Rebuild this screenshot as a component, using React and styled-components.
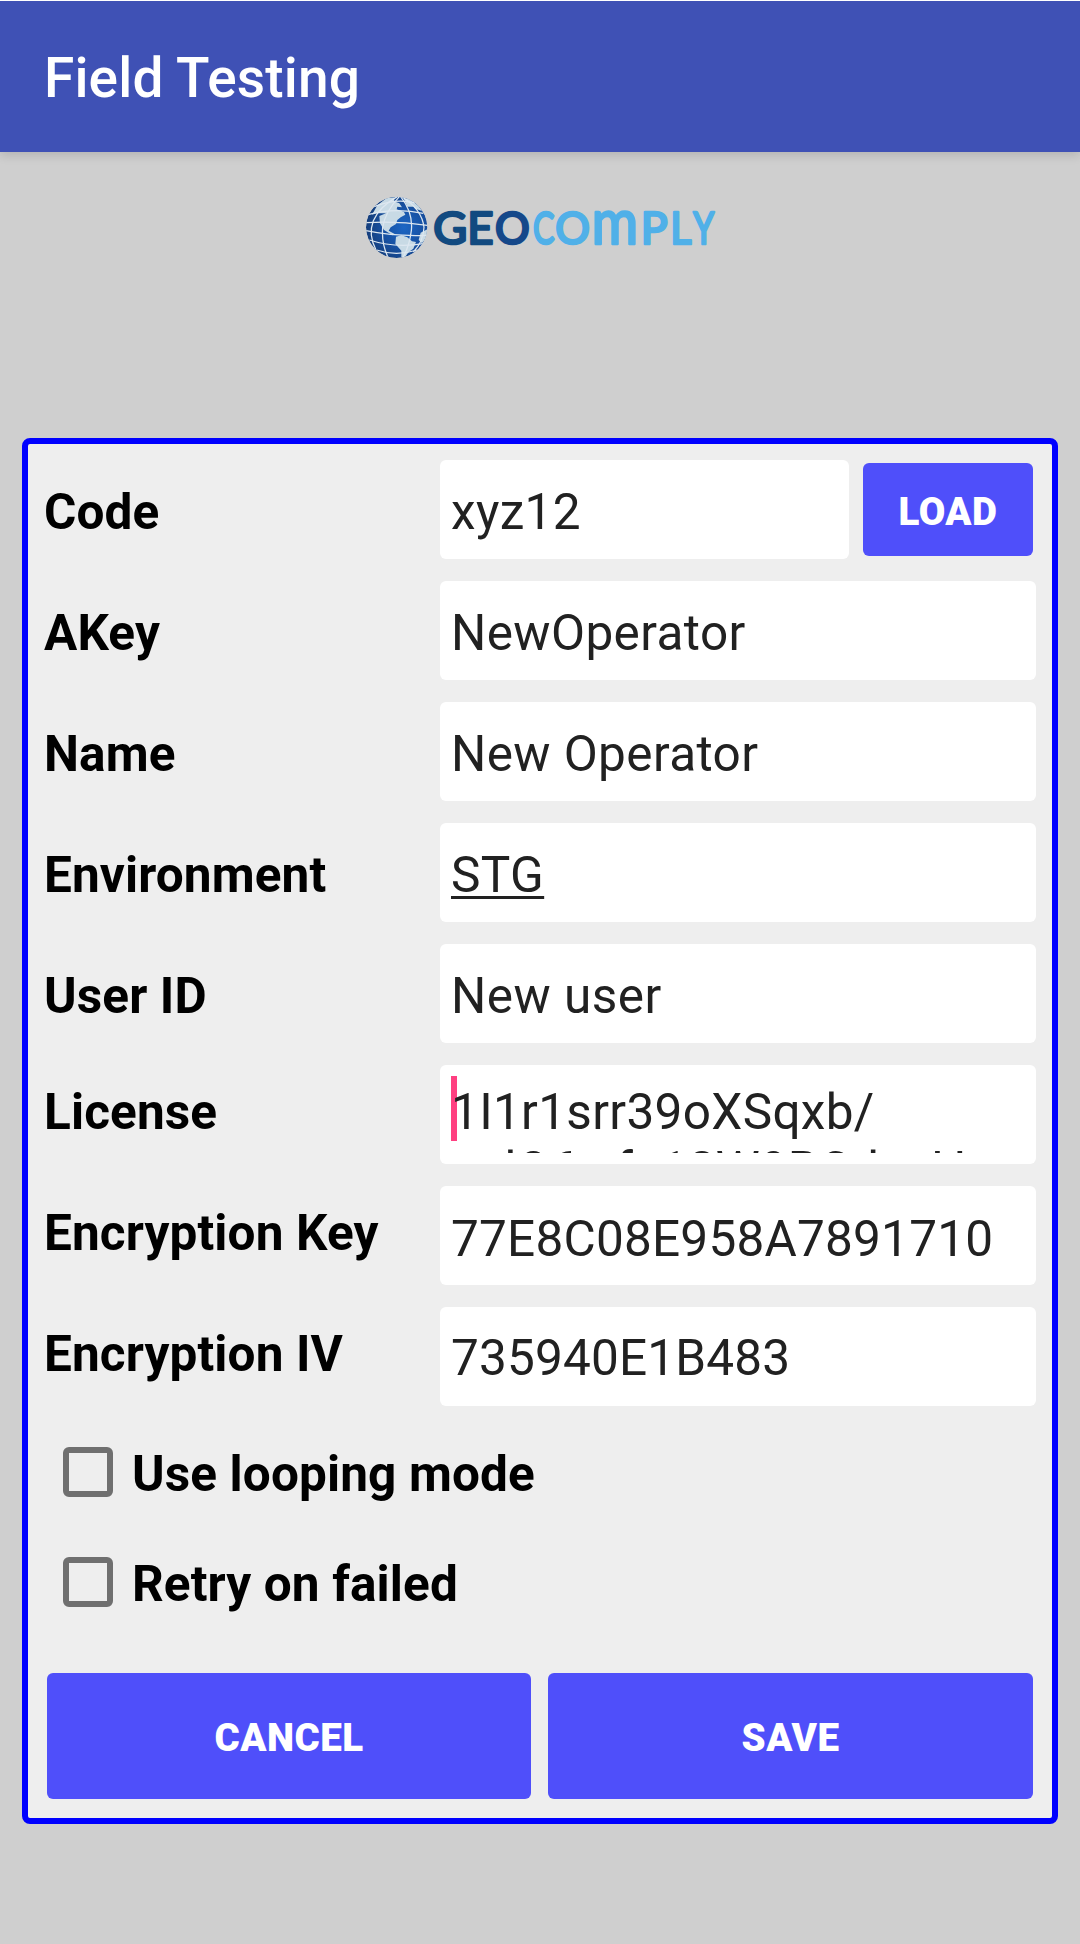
import React from "react";
import styled, { createGlobalStyle } from "styled-components";

const GlobalStyle = createGlobalStyle`
  *, *::before, *::after { box-sizing: border-box; }
  body { margin: 0; background: #cfcfcf; font-family: Roboto, "Noto Sans", sans-serif; }
`;

const Screen = styled.div`
  display: flex;
  flex-direction: column;
  width: 1080px;
  height: 1944px;
  overflow: hidden;
  background: #cfcfcf;
`;

const AppBar = styled.header`
  height: 152px;
  flex: none;
  border-top: 1px solid #fff;
  background: #3f51b5;
  box-shadow: 0 3px 10px rgba(0, 0, 0, 0.14);
`;

const Title = styled.h1`
  margin: 0;
  padding: 45px 44px 0;
  color: #fff;
  font-size: 55px;
  line-height: 64px;
  font-weight: 500;
  letter-spacing: 0.15px;
`;

const LogoArea = styled.div`
  display: flex;
  justify-content: center;
  height: 286px;
  flex: none;
  padding-top: 28px;
`;

const LogoSvg = styled.svg`
  display: block;
  width: 380px;
  height: 95px;
`;

const Card = styled.main`
  display: flex;
  flex-direction: column;
  height: 1386px;
  flex: none;
  margin: 0 22px;
  padding: 16px;
  border: 6px solid #0000ff;
  border-radius: 8px;
  background: #eeeeee;
`;

const Fields = styled.div`
  display: grid;
  gap: 22px;
`;

const Row = styled.div`
  display: grid;
  grid-template-columns: 396px 1fr;
  height: 99px;
`;

const Label = styled.label`
  padding-top: ${(p) => p.$top}px;
  color: #000;
  font-size: 49.5px;
  line-height: 58px;
  font-weight: 700;
  letter-spacing: 0.13px;
  white-space: nowrap;
`;

const Control = styled.div`
  display: flex;
  align-items: flex-start;
  width: 596px;
`;

const Input = styled.div`
  position: relative;
  flex: 1;
  min-width: 0;
  height: 99px;
  padding: ${(p) => p.$top}px 11px 0;
  border-radius: 6px;
  background: #fff;
  color: #212121;
  font-size: 49.5px;
  line-height: 58px;
  letter-spacing: ${(p) => p.$spacing}px;
  white-space: nowrap;
`;

const Underlined = styled.span`
  text-decoration: underline;
  text-decoration-thickness: 2.5px;
  text-underline-offset: 4px;
  text-decoration-skip-ink: none;
`;

const Clip = styled.div`
  position: relative;
  height: 70px;
  overflow: hidden;
`;

const NextLine = styled.span`
  letter-spacing: 0.1px;
`;

const Caret = styled.i`
  position: absolute;
  left: 11px;
  top: 11px;
  width: 6px;
  height: 65px;
  background: #ff4081;
`;

const Button = styled.button`
  flex: none;
  width: ${(p) => p.$width}px;
  height: ${(p) => p.$height}px;
  margin: ${(p) => p.$margin || "0"};
  padding: 4px 0 0;
  border: 0;
  border-radius: 6px;
  background: #4f4ffa;
  color: #fff;
  font-family: inherit;
  font-size: 38.5px;
  line-height: 46px;
  font-weight: 900;
  letter-spacing: 0.5px;
`;

const Options = styled.div`
  display: flex;
  flex-direction: column;
  gap: 52px;
  padding: 39px 0 0 19px;
`;

const Option = styled.label`
  display: flex;
  height: 58px;
  gap: 19px;
  color: #000;
  font-size: 49.5px;
  line-height: 58px;
  font-weight: 700;
  letter-spacing: 0.13px;
`;

const Box = styled.span`
  width: 50px;
  height: 50px;
  margin-top: 2px;
  border: 6px solid #6f6f6f;
  border-radius: 6px;
`;

const Actions = styled.footer`
  display: flex;
  gap: 17px;
  padding: 60px 3px 0;
`;

const NAVY = "#124a80";
const SKY = "#50b0e8";

const letters = [
  { ch: "G", x: 250, sx: 1.04, fill: NAVY },
  { ch: "E", x: 352, sx: 1.02, fill: NAVY },
  { ch: "O", x: 435, sx: 0.97, fill: "#15488a" },
  { ch: "C", x: 549, sx: 0.72, fill: SKY },
  { ch: "O", x: 616, sx: 0.97, fill: SKY },
  { ch: "m", x: 725, sx: 0.9, fill: SKY, size: 188 },
  { ch: "P", x: 872, sx: 1, fill: SKY },
  { ch: "L", x: 961, sx: 0.92, fill: SKY },
  { ch: "Y", x: 1030, sx: 0.75, fill: SKY },
];

function Logo() {
  return (
    <LogoSvg viewBox="0 0 1140 285" role="img" aria-label="GeoComply">
      <defs>
        <radialGradient id="sea" cx="0.62" cy="0.5" r="0.6">
          <stop offset="0" stopColor="#1c66c4" />
          <stop offset="0.6" stopColor="#174f9f" />
          <stop offset="1" stopColor="#153f7e" />
        </radialGradient>
        <clipPath id="disc">
          <circle cx="110" cy="112" r="92" />
        </clipPath>
      </defs>
      <g transform="translate(30 30)" clipPath="url(#disc)">
        <circle cx="110" cy="112" r="92" fill="url(#sea)" />
        <g fill="#c8dae5">
          <path d="M52 46 L80 24 L104 22 L102 34 L118 40 L126 52 L112 50 L110 58 L132 66 L136 74 L122 82 L112 90 L108 102 L92 112 L86 122 L104 132 L98 136 L72 120 L60 100 L58 78 L78 70 L50 70 L36 74 Z" />
          <path d="M130 24 L150 28 L176 48 L188 66 L184 62 L166 56 L160 50 L142 50 Z" />
          <path d="M108 140 L124 136 L142 142 L156 154 L168 156 L160 176 L146 186 L136 200 L124 202 L124 182 L106 162 Z" />
          <path d="M182 128 L202 118 L200 142 L186 160 L176 150 Z" />
        </g>
        <g fill="none" stroke="#dde7f0" strokeWidth="3.8">
          <path d="M112 20 Q58 50 40 92 Q24 134 48 180" />
          <path d="M118 20 Q76 64 68 112 Q64 160 84 202" />
          <path d="M122 20 Q160 68 154 122 Q148 170 128 204" />
          <path d="M126 20 Q186 58 192 112 Q190 156 160 186" />
          <path d="M42 50 Q104 24 164 38" />
          <path d="M24 74 Q104 52 190 70" />
          <path d="M18 98 Q110 92 202 106" />
          <path d="M18 122 Q104 140 202 136" />
          <path d="M28 150 Q108 176 194 160" />
          <path d="M50 180 Q108 200 172 180" />
        </g>
      </g>
      <g fontFamily="Lato, sans-serif" fontWeight="400" strokeWidth="8" strokeLinejoin="round">
        {letters.map((l, i) => (
          <text
            key={i}
            transform={`translate(${l.x} 193) scale(${l.sx} 1)`}
            fill={l.fill}
            stroke={l.fill}
            fontSize={l.size || 134}
          >
            {l.ch}
          </text>
        ))}
      </g>
    </LogoSvg>
  );
}

const rows = [
  { label: "Code", value: "xyz12", labelTop: 23, top: 23, spacing: 0.35, load: true },
  { label: "AKey", value: "NewOperator", labelTop: 23, top: 23, spacing: 0.4 },
  { label: "Name", value: "New Operator", labelTop: 23, top: 23, spacing: 0.4 },
  { label: "Environment", value: <Underlined>STG</Underlined>, labelTop: 23, top: 23, spacing: 0.4 },
  { label: "User ID", value: "New user", labelTop: 23, top: 23, spacing: 0.5 },
  {
    label: "License",
    value: (
      <>
        <Caret />
        <Clip>
          1I1r1srr39oXSqxb/
          <br />
          <NextLine>wdO6wfa18W9BCdesH</NextLine>
        </Clip>
      </>
    ),
    labelTop: 18,
    top: 18,
    spacing: 0.33,
  },
  { label: "Encryption Key", value: "77E8C08E958A7891710", labelTop: 18, top: 24, spacing: 0.22 },
  { label: "Encryption IV", value: "735940E1B483", labelTop: 18, top: 22, spacing: 0.17 },
];

export default function App() {
  return (
    <Screen>
      <GlobalStyle />
      <AppBar>
        <Title>Field Testing</Title>
      </AppBar>
      <LogoArea>
        <Logo />
      </LogoArea>
      <Card>
        <Fields>
          {rows.map((r) => (
            <Row key={r.label}>
              <Label $top={r.labelTop}>{r.label}</Label>
              <Control>
                <Input $top={r.top} $spacing={r.spacing}>
                  {r.value}
                </Input>
                {r.load && (
                  <Button $width={170} $height={93} $margin="3px 3px 0 14px">
                    LOAD
                  </Button>
                )}
              </Control>
            </Row>
          ))}
        </Fields>
        <Options>
          <Option>
            <Box />
            Use looping mode
          </Option>
          <Option>
            <Box />
            Retry on failed
          </Option>
        </Options>
        <Actions>
          <Button $width={484} $height={126}>
            CANCEL
          </Button>
          <Button $width={485} $height={126}>
            SAVE
          </Button>
        </Actions>
      </Card>
    </Screen>
  );
}
